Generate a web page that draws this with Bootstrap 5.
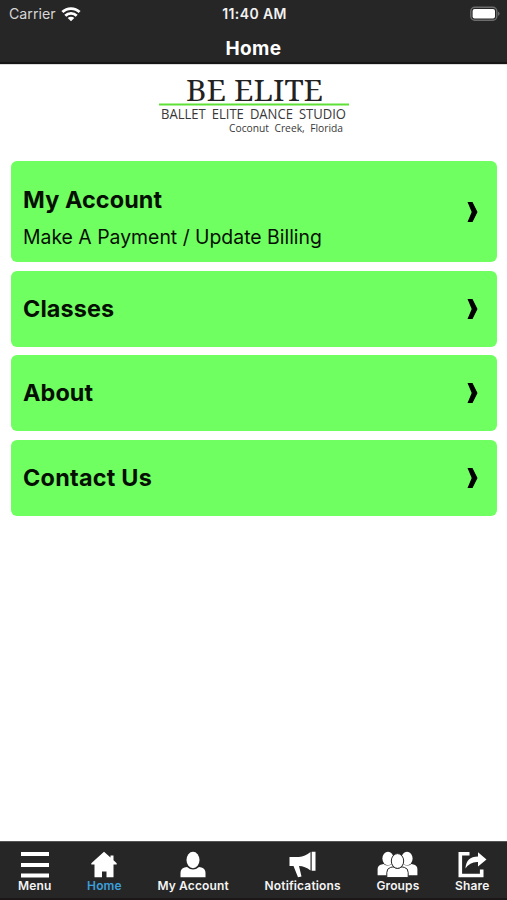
<!DOCTYPE html>
<html lang="en">
<head>
<meta charset="utf-8">
<meta name="viewport" content="width=device-width, initial-scale=1">
<title>Home</title>
<link href="https://cdn.jsdelivr.net/npm/bootstrap@5.3.0/dist/css/bootstrap.min.css" rel="stylesheet">
<style>
body{font-family:Inter,"Liberation Sans",sans-serif;height:900px;background:#fff;overflow:hidden}
svg{display:block;flex:none;overflow:visible}
.app-top{height:65px;background:#262626;border-bottom:1px solid #dcdcdc;box-shadow:inset 0 -2px 0 #161616}
.status{height:27px;padding:0 7px 0 9px;font-size:13px;line-height:27px}
.status-side{flex:1 1 0}
.carrier{color:#d6d6d6;font-size:14.2px;gap:4px}
.clock{font-weight:600;color:#f2f2f2;font-size:14px;letter-spacing:.4px}
.title-bar{height:37px;line-height:44px;font-size:19px;font-weight:700;letter-spacing:.4px}
.brand{height:96px;padding-top:10px}
.tiles{padding:0 10.5px 0 11px;gap:8.5px}
.tile{background:#70ff60;border-radius:6px;height:76px;padding:0 19px 0 12px;color:#050f03}
.tile:hover{color:#050f03}
.tile-tall{height:101px}
.tile-tall>div{padding-top:12px}
.tile-name{font-size:23.4px;line-height:30px;font-weight:700;letter-spacing:.1px}
.tile-last{letter-spacing:.25px}
.tile-note{font-size:19.4px;line-height:26px;margin-top:9px}
.tabs{height:59px;background:#262626;border-top:1px solid #555;border-bottom:2px solid #1b1719;padding:9px 17.5px 0 18px}
.tab{font-size:12px;line-height:16px;font-weight:600;color:#f4f4f4;letter-spacing:.15px}
.tab svg{height:27px}
.tab.current{color:#3c9fdc}
</style>
<script src="https://cdn.jsdelivr.net/npm/bootstrap@5.3.0/dist/js/bootstrap.bundle.min.js"></script>
</head>
<body class="d-flex flex-column">
<header class="app-top text-white">
  <div class="status d-flex align-items-center">
    <div class="status-side d-flex align-items-center carrier"><span>Carrier</span>
      <svg width="22" height="18" viewBox="0 0 22 18" fill="none" stroke="#fff" stroke-width="2.800"><path d="M2.400 7.100a12.200 12.200 0 0 1 17.200 0M5.300 10.700a8 8 0 0 1 11.400 0"/><path d="M11 16.300 7.700 13a4.700 4.700 0 0 1 6.600 0z" fill="#fff" stroke="none"/></svg>
    </div>
    <div class="clock">11:40 AM</div>
    <div class="status-side d-flex justify-content-end"><svg width="30" height="16" viewBox="0 0 30 16"><rect x=".8" y="1.300" width="26" height="13" rx="4" fill="#262626" stroke="#6d6d6d" stroke-width="1.400"/><rect x="2.600" y="3" width="22.400" height="9.600" rx="2" fill="#fff"/><path d="M28.300 5.600q2.400 2.200 0 4.500z" fill="#888"/></svg></div>
  </div>
  <h1 class="title-bar text-center m-0">Home</h1>
</header>
<main class="flex-grow-1">
  <div class="brand d-flex justify-content-center">
    <svg width="192" height="62" viewBox="0 0 192 62">
      <text x="28" y="26.300" font-family="Noto Serif, Liberation Serif, serif" font-size="29.500" fill="#222" textLength="137" lengthAdjust="spacingAndGlyphs">BE ELITE</text>
      <path d="M1 29.500h190" stroke="#5fe036" stroke-width="1.900"/>
      <g font-family="Open Sans, Noto Sans, sans-serif" fill="#383838"><text x="3" y="43.500" font-size="14.800" word-spacing="3" textLength="185" lengthAdjust="spacingAndGlyphs">BALLET ELITE DANCE STUDIO</text>
      <text x="71" y="56.900" font-size="11.200" word-spacing="3" textLength="114" lengthAdjust="spacingAndGlyphs">Coconut Creek, Florida</text></g>
    </svg>
  </div>
  <nav class="tiles d-flex flex-column">
    <a href="#" class="tile tile-tall d-flex align-items-center justify-content-between text-decoration-none"><div><div class="tile-name">My Account</div><div class="tile-note">Make A Payment / Update Billing</div></div><svg width="11" height="20" viewBox="0 0 11 20"><path d="M.5 0h5L10.500 10l-5 10h-5l4.200-10z"/></svg></a>
    <a href="#" class="tile d-flex align-items-center justify-content-between text-decoration-none"><div class="tile-name">Classes</div><svg width="11" height="20" viewBox="0 0 11 20"><path d="M.5 0h5L10.500 10l-5 10h-5l4.200-10z"/></svg></a>
    <a href="#" class="tile d-flex align-items-center justify-content-between text-decoration-none"><div class="tile-name">About</div><svg width="11" height="20" viewBox="0 0 11 20"><path d="M.5 0h5L10.500 10l-5 10h-5l4.200-10z"/></svg></a>
    <a href="#" class="tile d-flex align-items-center justify-content-between text-decoration-none"><div class="tile-name tile-last">Contact Us</div><svg width="11" height="20" viewBox="0 0 11 20"><path d="M.5 0h5L10.500 10l-5 10h-5l4.200-10z"/></svg></a>
  </nav>
</main>
<footer class="tabs d-flex justify-content-between">
  <div class="tab d-flex flex-column align-items-center"><svg width="30" viewBox="0 0 30 27" fill="#fff"><path d="M1 1h28v4H1zM1 12h28v4H1zM1 22.500h28v4H1z"/></svg>Menu</div>
  <div class="tab current d-flex flex-column align-items-center"><svg width="26" viewBox="0 0 26 27" fill="#fff"><path d="M13 .8 19.500 6.600V4.500h3v4.800l3.200 3V13.500H22.500V26.300h-7V20.500h-4.500v5.800h-7.500v-12.800H.3v-1.200z"/></svg>Home</div>
  <div class="tab d-flex flex-column align-items-center"><svg width="26" viewBox="0 0 26 27" fill="#fff"><ellipse cx="13" cy="9" rx="6.500" ry="8.300"/><path d="M.5 26.300V22q0-4.500 4-5.500l2.500-.5q6 5 12 0l2.500.5q4 1 4 5.500v4.300z"/></svg>My Account</div>
  <div class="tab d-flex flex-column align-items-center"><svg width="27" viewBox="0 0 27 27" fill="#fff"><path d="M.5 6H10Q16 5.500 21.500 1v18.500Q16 15 10 15l2.500 10.500-3.500.8L4.500 15h-4zM22.700 .8h3.800v18.900h-3.800z"/></svg>Notifications</div>
  <div class="tab d-flex flex-column align-items-center"><svg width="41" viewBox="0 0 41 27" fill="#fff"><ellipse cx="11" cy="7.500" rx="5.600" ry="6.800"/><ellipse cx="30" cy="7.500" rx="5.600" ry="6.800"/><path d="M.6 24.300v-6q0-3.500 3-4.500l3-.8q4 3 8 0l4 3.500v7.800zM40.400 24.300v-6q0-3.500-3-4.500l-3-.8q-4 3-8 0l-4 3.500v7.800z"/><g stroke="#262626" stroke-width="1"><path d="M9.800 26.600v-5q0-4.300 3.800-5.200l2.400-.5q4.500 3 9 0l2.400.5q3.800.9 3.800 5.200v5z"/><ellipse cx="20.500" cy="10" rx="6.200" ry="7.400"/></g></svg>Groups</div>
  <div class="tab d-flex flex-column align-items-center"><svg width="29" viewBox="0 0 29 27"><path d="M11.500 2.800H2.300v21.700h21.400V18.500" fill="none" stroke="#fff" stroke-width="3.600"/><path d="M7.500 17.500Q8 5.500 20 5.500V1.200l8.500 7.300L20 15.500V11Q12 10.500 7.500 17.500z" fill="#fff"/></svg>Share</div>
</footer>
</body>
</html>
